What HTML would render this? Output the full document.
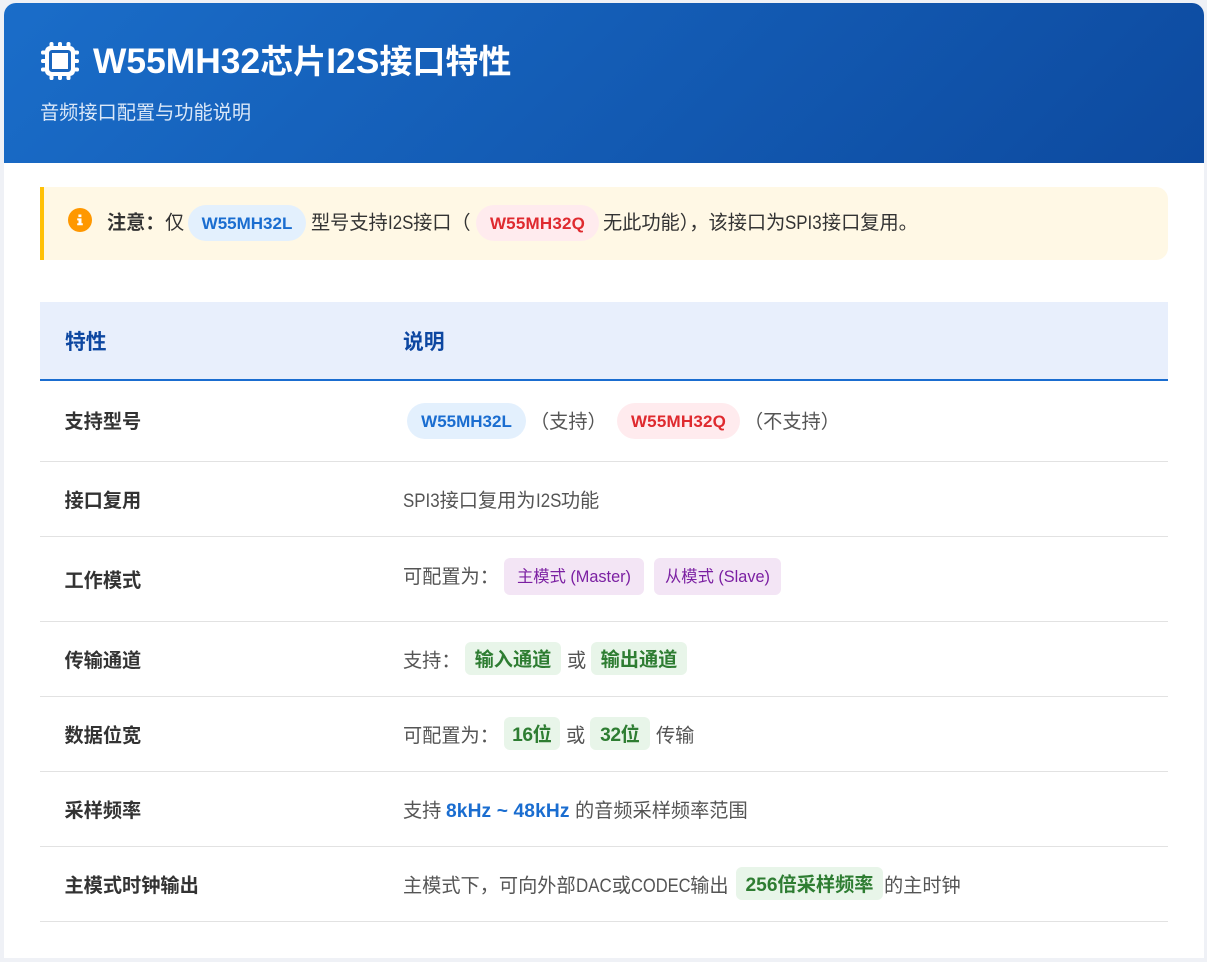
<!DOCTYPE html>
<html lang="zh-CN"><head><meta charset="utf-8"><title>W55MH32芯片I2S接口特性</title>
<style>
*{box-sizing:border-box;margin:0;padding:0}
html,body{width:1207px;height:962px;overflow:hidden;background:#eff1f6}
body{position:relative;font-family:"Liberation Sans","Noto Sans CJK SC",sans-serif;color:#555}
.card{position:absolute;left:4px;top:3px;width:1200px;height:955px;background:#fff;border-radius:12px 12px 0 0}
.hd{position:absolute;left:4px;top:3px;width:1200px;height:160px;border-radius:12px 12px 0 0;background:linear-gradient(135deg,#1a6dc9,#0d4a9f)}
.t,.p{position:absolute;white-space:nowrap}
.t{font-size:19.2px;line-height:36px;height:36px}
.p{text-align:center;font-weight:600}
.l{display:inline-block;transform:scaleX(.88);transform-origin:left center}
.b{font-weight:700;color:#333}
.blue{background:#e3f0fd;color:#1a6dd0;border-radius:18px;font-size:17px;height:36px;line-height:38px}
.red{background:#ffebee;color:#df2a2f;border-radius:18px;font-size:17px;letter-spacing:.2px;height:36px;line-height:38px}
.pur{background:#f3e5f5;color:#7b1fa2;border-radius:6px;font-size:16.3px;font-weight:400;height:37px;line-height:39px}
.grn{background:#e8f5e9;color:#2e7d32;border-radius:6px;font-size:19.2px;font-weight:700;height:33px;line-height:37px}
.line{position:absolute;left:40px;width:1128px;height:1px;background:#e2e2e2}
</style></head><body>
<div class="card"></div>
<div class="hd"></div>
<svg style="position:absolute;left:40px;top:41px" width="40" height="40" viewBox="0 0 40 40">
<g fill="#fff">
<rect x="9.5" y="1" width="4" height="38" rx="1.8"/><rect x="18" y="1" width="4" height="38" rx="1.8"/><rect x="26.5" y="1" width="4" height="38" rx="1.8"/>
<rect x="1" y="9.5" width="38" height="4" rx="1.8"/><rect x="1" y="18" width="38" height="4" rx="1.8"/><rect x="1" y="26.5" width="38" height="4" rx="1.8"/></g>
<rect x="5" y="5" width="30" height="30" rx="5" fill="#fff"/>
<rect x="10.5" y="10.5" width="19" height="19" rx="1.5" fill="#fff" stroke="#1a66bf" stroke-width="3"/>
</svg>
<div class="t" style="left:93px;top:35px;font-size:33px;line-height:52px;height:52px;font-weight:700;color:#fff"><span style="font-size:35.4px">W55MH32</span>芯片<span style="font-size:35.4px">I2S</span>接口特性</div>
<div class="t" style="left:40px;top:96px;color:#dbe8f8">音频接口配置与功能说明</div>

<div style="position:absolute;left:40px;top:187px;width:1128px;height:73px;background:#fff8e5;border-left:4px solid #ffc107;border-radius:0 12px 12px 0"></div>
<svg style="position:absolute;left:68px;top:208px" width="24" height="24" viewBox="0 0 24 24"><circle cx="12" cy="12" r="12" fill="#ff9800"/><rect x="10.4" y="6.5" width="3" height="2.6" fill="#fff"/><path d="M9.2 10.4h4.3v4.8h1.3v2H9.2v-2h1.3v-2.8H9.2z" fill="#fff"/></svg>
<div class="t" style="left:107px;top:206px;font-weight:700;color:#333">注意：</div>
<div class="t" style="left:165px;top:206px;color:#333">仅</div>
<div class="p blue" style="left:188px;top:205px;width:118px">W55MH32L</div>
<div class="t" style="left:311px;top:206px;color:#333">型号支持<span class="l" style="margin-right:-3.5px">I2S</span>接口（</div>
<div class="p red" style="left:476px;top:205px;width:123px">W55MH32Q</div>
<div class="t" style="left:603px;top:206px;color:#333">无此功能），该接口为<span class="l" style="margin-right:-5px">SPI3</span>接口复用。</div>

<div style="position:absolute;left:40px;top:302px;width:1128px;height:79px;background:#e8effc;border-bottom:2px solid #1a6dd0"></div>
<div class="t" style="left:65px;top:325px;font-size:20.8px;font-weight:700;color:#0d47a1">特性</div>
<div class="t" style="left:403px;top:325px;font-size:20.8px;font-weight:700;color:#0d47a1">说明</div>

<div class="t b" style="left:64.5px;top:405px">支持型号</div>
<div class="p blue" style="left:407px;top:403px;width:119px">W55MH32L</div>
<div class="t" style="left:530px;top:405px">（支持）</div>
<div class="p red" style="left:617px;top:403px;width:123px">W55MH32Q</div>
<div class="t" style="left:744px;top:405px">（不支持）</div>
<div class="line" style="top:461px"></div>

<div class="t b" style="left:64.5px;top:484px">接口复用</div>
<div class="t" style="left:403px;top:484px"><span class="l" style="margin-right:-5px">SPI3</span>接口复用为<span class="l" style="margin-right:-3.5px">I2S</span>功能</div>
<div class="line" style="top:536px"></div>

<div class="t b" style="left:64.5px;top:564px">工作模式</div>
<div class="t" style="left:403px;top:560px">可配置为：</div>
<div class="p pur" style="left:504px;top:558px;width:140px">主模式 (Master)</div>
<div class="p pur" style="left:654px;top:558px;width:127px">从模式 (Slave)</div>
<div class="line" style="top:621px"></div>

<div class="t b" style="left:64.5px;top:644px">传输通道</div>
<div class="t" style="left:403px;top:644px">支持：</div>
<div class="p grn" style="left:465px;top:642px;width:96px">输入通道</div>
<div class="t" style="left:567px;top:644px">或</div>
<div class="p grn" style="left:591px;top:642px;width:96px">输出通道</div>
<div class="line" style="top:696px"></div>

<div class="t b" style="left:64.5px;top:719px">数据位宽</div>
<div class="t" style="left:403px;top:719px">可配置为：</div>
<div class="p grn" style="left:504px;top:717px;width:56px"><span style="letter-spacing:-.4px">16</span>位</div>
<div class="t" style="left:566px;top:719px">或</div>
<div class="p grn" style="left:590px;top:717px;width:60px"><span style="letter-spacing:-.4px">32</span>位</div>
<div class="t" style="left:656px;top:719px">传输</div>
<div class="line" style="top:771px"></div>

<div class="t b" style="left:64.5px;top:794px">采样频率</div>
<div class="t" style="left:403px;top:794px">支持</div>
<div class="t" style="left:446px;top:794px;font-weight:700;color:#1a6dd0;letter-spacing:.12px">8kHz ~ 48kHz</div>
<div class="t" style="left:575px;top:794px">的音频采样频率范围</div>
<div class="line" style="top:846px"></div>

<div class="t b" style="left:64.5px;top:869px">主模式时钟输出</div>
<div class="t" style="left:403px;top:869px">主模式下，可向外部<span class="l" style="margin-right:-4.5px">DAC</span>或<span class="l" style="transform:scaleX(.86);margin-right:-10px">CODEC</span>输出</div>
<div class="p grn" style="left:736px;top:867px;width:147px">256倍采样频率</div>
<div class="t" style="left:884px;top:869px">的主时钟</div>
<div class="line" style="top:921px"></div>
</body></html>
